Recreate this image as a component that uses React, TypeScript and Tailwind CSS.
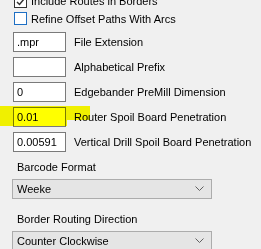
import React from "react";

type TField = {
  value: string;
  label: string;
  marked?: boolean;
};

const fields: TField[] = [
  { value: ".mpr", label: "File Extension" },
  { value: "", label: "Alphabetical Prefix" },
  { value: "0", label: "Edgebander PreMill Dimension" },
  { value: "0.01", label: "Router Spoil Board Penetration", marked: true },
  { value: "0.00591", label: "Vertical Drill Spoil Board Penetration" },
];

const Chevron = () => (
  <svg width="9" height="6" viewBox="0 0 9 6" className="shrink-0">
    <path d="M0.5 0.5 L4.5 4.5 L8.5 0.5" fill="none" stroke="#606060" strokeWidth="1" />
  </svg>
);

const Check = ({ checked, focused }: { checked?: boolean; focused?: boolean }) => (
  <div
    className={`w-[13px] h-[13px] bg-white border flex items-center justify-center shrink-0 ${
      focused ? "border-[#1e6fc4]" : "border-[#333333]"
    }`}
  >
    {checked && (
      <svg width="9" height="8" viewBox="0 0 9 8">
        <path d="M1 4 L3.5 6.5 L8 1" fill="none" stroke="#333" strokeWidth="1.5" />
      </svg>
    )}
  </div>
);

const Select = ({ value }: { value: string }) => (
  <div className="ml-[12px] w-[200px] h-[20px] bg-[#e5e5e5] border border-[#acacac] flex items-center justify-between pl-[4px] pr-[7px] shrink-0">
    <span>{value}</span>
    <Chevron />
  </div>
);

export default function App() {
  return (
    <div
      className="relative w-[261px] h-[249px] overflow-hidden bg-[#f0f0f0] text-black text-[11px] leading-[13px] whitespace-nowrap flex flex-col"
      style={{ fontFamily: '"Liberation Sans", Arial, sans-serif' }}
    >
      <div className="flex flex-col gap-[4px] pl-[14px] -mt-[5px]">
        <div className="flex items-center gap-[4px] h-[13px]">
          <Check checked />
          <span>Include Routes in Borders</span>
        </div>
        <div className="flex items-center gap-[4px] h-[13px]">
          <Check focused />
          <span className="pt-[1px]">Refine Offset Paths With Arcs</span>
        </div>
      </div>

      <div className="flex flex-col gap-[5px] pl-[13px] mt-[7px]">
        {fields.map((f) => (
          <div key={f.label} className="relative flex items-center gap-[8px] h-[20px]">
            <div className="w-[53px] h-[20px] bg-white border border-[#7a7a7a] flex items-center pl-[3px] shrink-0">
              {f.value}
            </div>
            <span>{f.label}</span>
            {f.marked && (
              <>
                <div className="absolute -left-[13px] top-[-1px] w-[90px] h-[14px] bg-[#ffff00] mix-blend-multiply" />
                <div className="absolute -left-[13px] top-[2px] w-[67px] h-[17px] bg-[#ffff00] mix-blend-multiply" />
              </>
            )}
          </div>
        ))}
      </div>

      <div className="pl-[17px] mt-[9px] h-[14px] flex items-center">Barcode Format</div>
      <div className="mt-[5px]">
        <Select value="Weeke" />
      </div>

      <div className="pl-[17px] mt-[14px] h-[14px] flex items-center">Border Routing Direction</div>
      <div className="mt-[5px]">
        <Select value="Counter Clockwise" />
      </div>
    </div>
  );
}
